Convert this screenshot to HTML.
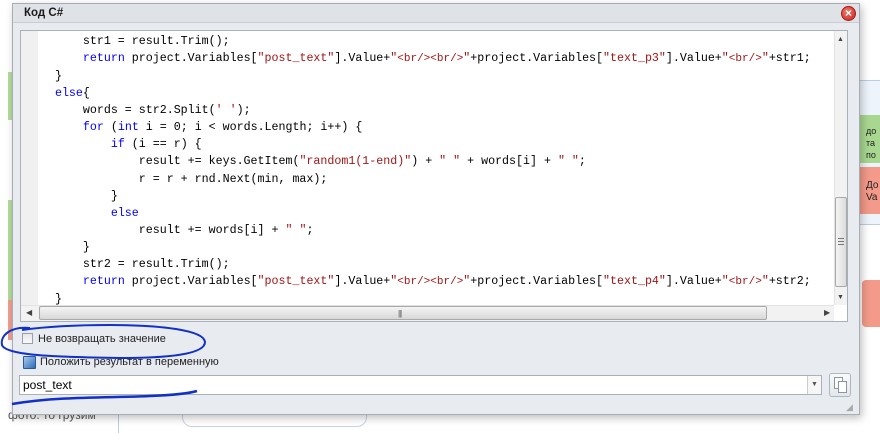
<!DOCTYPE html>
<html><head><meta charset="utf-8"><style>
*{margin:0;padding:0;box-sizing:border-box}
body{width:880px;height:433px;background:#fff;position:relative;overflow:hidden;font-family:"Liberation Sans",sans-serif}
.abs{position:absolute}
.code{font-family:"Liberation Mono",monospace;font-size:11.65px;white-space:pre;color:#000;line-height:17.07px}
.k{color:#0000ff}.s{color:#a31515}.t{color:#a31515;font-size:11px}
</style></head><body>
<div class="abs" style="left:8px;top:72px;width:5px;height:48px;background:#b5dc9a"></div>
<div class="abs" style="left:8px;top:200px;width:5px;height:140px;background:#b5dc9a"></div>
<div class="abs" style="left:8px;top:300px;width:5px;height:40px;background:#f0a090"></div>
<div class="abs" style="left:860px;top:80px;width:20px;height:145px;background:#eef4fb;border-top:1px solid #b8cde6;border-bottom:1px solid #b8cde6"></div>
<div class="abs" style="left:860px;top:115px;width:20px;height:48px;background:#a8d890"></div>
<div class="abs" style="left:860px;top:167px;width:20px;height:47px;background:#f39a8a"></div>
<div class="abs" style="left:862px;top:280px;width:18px;height:47px;background:#f39a8a;border-radius:4px 0 0 4px"></div>
<div class="abs" style="left:866px;top:125px;font-size:9px;line-height:12px;color:#222">до<br>та<br>по</div>
<div class="abs" style="left:866px;top:180px;font-size:10px;line-height:12px;color:#222">До<br>Va</div>
<div class="abs" style="left:8px;top:408px;font-size:12px;color:#555">фото. то грузим</div>
<div class="abs" style="left:118px;top:415px;width:1px;height:18px;background:#bcd"></div>
<div class="abs" style="left:182px;top:405px;width:185px;height:22px;border:1px solid #c8d4e0;border-radius:10px"></div>
<div class="abs" style="left:12px;top:3px;width:848px;height:412px;background:#e8ebef;border:1px solid #a7adb5;box-shadow:2px 3px 8px rgba(0,0,0,.25)"></div>
<div class="abs" style="left:13px;top:4px;width:846px;height:19px;background:#dfe3e8;border-bottom:1px solid #c9ced5"></div>
<div class="abs" style="left:24px;top:7px;font-size:11.5px;font-weight:bold;color:#1a1a1a">Код C#</div>
<div class="abs" style="left:841px;top:6px;width:15px;height:15px;border-radius:50%;background:radial-gradient(circle at 40% 35%,#f07a70,#c8221a);border:1px solid #a01c16;color:#fff;font-size:12px;font-weight:bold;line-height:13px;text-align:center">×</div>
<div class="abs" style="left:20px;top:30px;width:828px;height:292px;background:#fff;border:1px solid #a9b0b8;overflow:hidden">
<div class="abs" style="left:0;top:0;width:17px;height:274px;background:#f0f0f0"></div>
<div class="abs code" style="left:6px;top:2px">        str1 = result.Trim();
        <span class="k">return</span> project.Variables[<span class="s">"post_text"</span>].Value+<span class="s">"<span class="t">&lt;br/&gt;&lt;br/&gt;</span>"</span>+project.Variables[<span class="s">"text_p3"</span>].Value+<span class="s">"<span class="t">&lt;br/&gt;</span>"</span>+str1;
    }
    <span class="k">else</span>{
        words = str2.Split(<span class="s">' '</span>);
        <span class="k">for</span> (<span class="k">int</span> i = 0; i &lt; words.Length; i++) {
            <span class="k">if</span> (i == r) {
                result += keys.GetItem(<span class="s">"random1(1-end)"</span>) + <span class="s">" "</span> + words[i] + <span class="s">" "</span>;
                r = r + rnd.Next(min, max);
            }
            <span class="k">else</span>
                result += words[i] + <span class="s">" "</span>;
        }
        str2 = result.Trim();
        <span class="k">return</span> project.Variables[<span class="s">"post_text"</span>].Value+<span class="s">"<span class="t">&lt;br/&gt;&lt;br/&gt;</span>"</span>+project.Variables[<span class="s">"text_p4"</span>].Value+<span class="s">"<span class="t">&lt;br/&gt;</span>"</span>+str2;
    }</div>
</div>
<div class="abs" style="left:834px;top:31px;width:13px;height:274px;background:#f2f2f2;border-left:1px solid #e2e2e2"></div>
<div class="abs" style="left:837px;top:36px;font-size:7px;color:#444">▲</div>
<div class="abs" style="left:837px;top:294px;font-size:7px;color:#444">▼</div>
<div class="abs" style="left:835px;top:197px;width:12px;height:90px;background:linear-gradient(90deg,#f4f4f4,#dcdcdc);border:1px solid #a9a9a9;border-radius:2px"></div>
<div class="abs" style="left:838px;top:238px;width:6px;height:7px;border-top:1px solid #777;border-bottom:1px solid #777"></div>
<div class="abs" style="left:838px;top:241px;width:6px;height:1px;background:#777"></div>
<div class="abs" style="left:21px;top:305px;width:813px;height:16px;background:#f2f2f2;border-top:1px solid #e2e2e2"></div>
<div class="abs" style="left:26px;top:308px;font-size:8px;color:#444">◀</div>
<div class="abs" style="left:824px;top:308px;font-size:8px;color:#444">▶</div>
<div class="abs" style="left:39px;top:306px;width:728px;height:14px;background:linear-gradient(#f4f4f4,#d8d8d8);border:1px solid #a9a9a9;border-radius:2px"></div>
<div class="abs" style="left:398px;top:309px;font-size:8px;color:#666;letter-spacing:-1px">|||</div>
<div class="abs" style="left:22px;top:333px;width:11px;height:11px;border:1px solid #9aa0a8;background:linear-gradient(#e6e6e6,#fafafa)"></div>
<div class="abs" style="left:38px;top:333px;font-size:11px;color:#222">Не возвращать значение</div>
<div class="abs" style="left:23px;top:356px;width:13px;height:13px;background:linear-gradient(135deg,#a9c9ee,#2e6db4);border:1px solid #2a5a9a;border-radius:1px"></div>
<div class="abs" style="left:40px;top:356px;font-size:11px;color:#222">Положить результат в переменную</div>
<div class="abs" style="left:19px;top:375px;width:803px;height:20px;background:#fff;border:1px solid #abb1b9"></div>
<div class="abs" style="left:23px;top:378px;font-size:12px;color:#000">post_text</div>
<div class="abs" style="left:807px;top:376px;width:14px;height:18px;border-left:1px solid #ccc;background:#f6f6f6"></div>
<div class="abs" style="left:811px;top:381px;font-size:7px;color:#555">▼</div>
<div class="abs" style="left:829px;top:373px;width:22px;height:24px;border:1px solid #b0b6be;border-radius:3px;background:linear-gradient(#fafafa,#e4e7ea)"></div>
<div class="abs" style="left:834px;top:377px;width:9px;height:12px;border:1px solid #8a96a4;background:#fff"></div>
<div class="abs" style="left:838px;top:381px;width:9px;height:12px;border:1px solid #8a96a4;background:#fff"></div>
<div class="abs" style="left:846px;top:402px;font-size:9px;color:#aaa">◢</div>
<svg class="abs" style="left:0;top:0" width="880" height="433">
<path d="M30,328 C10,326 0,336 2,345 C6,356 60,357 120,358 C170,358 205,354 205,342 C204,330 160,325 110,325 C80,325 50,326 22,330" fill="none" stroke="#1030c8" stroke-width="2"/>
<path d="M12,404 C60,396 110,398 150,396 C175,395 190,393 197,391" fill="none" stroke="#1030c8" stroke-width="2.5"/>
</svg>
</body></html>
